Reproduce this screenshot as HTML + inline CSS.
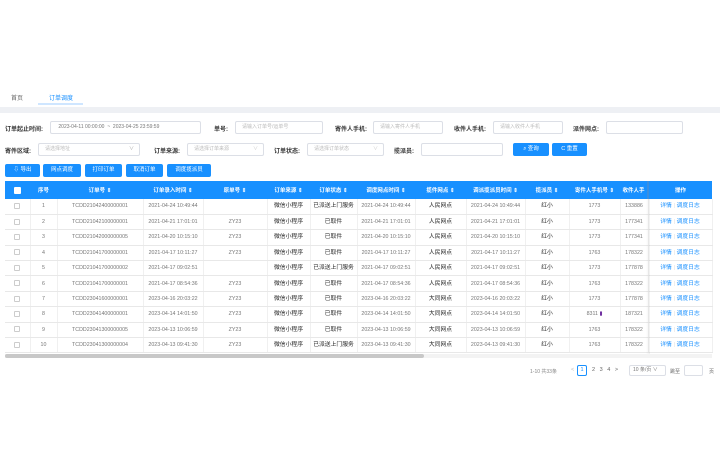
<!DOCTYPE html>
<html><head><meta charset="utf-8"><style>
*{margin:0;padding:0;box-sizing:border-box}
body{width:720px;height:450px;background:#fff;font-family:"Liberation Sans","Noto Sans CJK SC",sans-serif;position:relative;overflow:hidden;color:#333}
.a{position:absolute;white-space:nowrap}
.lbl{font-size:6px;font-weight:bold;color:#333}
.inp{position:absolute;height:13px;border:1px solid #dcdfe6;border-radius:2px;font-size:5px;color:#bbb;padding-left:6px;line-height:11px}
.btn{position:absolute;height:13px;background:#1890ff;color:#fff;font-size:5.5px;border-radius:2px;text-align:center;line-height:13px}
table{border-collapse:collapse;position:absolute;left:5px;top:181px;table-layout:fixed;font-size:5.3px}
th{background:#1890ff;color:#fff;height:18px;font-weight:bold;font-size:5.5px;vertical-align:middle}
td{height:15.4px;line-height:8px;vertical-align:middle;border-bottom:1px solid #e8e8e8;border-right:1px solid #f0f0f0;color:#777;text-align:center;white-space:nowrap;overflow:hidden}
td.k{color:#222;font-size:5.8px}
td.op{color:#1890ff;font-size:5.8px}
.cb{display:inline-block;vertical-align:middle;width:6px;height:6px;border:1px solid #ccc;background:#fff;border-radius:1px}
</style></head><body>
<div class="a" style="left:11px;top:93px;font-size:6px;color:#666">首页</div>
<div class="a" style="left:49px;top:93px;font-size:6px;color:#1890ff">订单调度</div>
<div class="a" style="left:38px;top:103px;width:45px;height:2px;background:#cfe6ff"></div>
<div class="a" style="left:0;top:107px;width:720px;height:6px;background:#eef0f4"></div>

<div class="a lbl" style="left:5px;top:124px">订单起止时间:</div>
<div class="inp" style="left:50px;top:121px;width:151px;color:#777">&nbsp;2023-04-11 00:00:00 &nbsp;~ &nbsp;2023-04-25 23:59:59</div>
<div class="a lbl" style="left:214px;top:124px">单号:</div>
<div class="inp" style="left:235px;top:121px;width:88px">请输入订单号/运单号</div>
<div class="a lbl" style="left:335px;top:124px">寄件人手机:</div>
<div class="inp" style="left:373px;top:121px;width:70px">请输入寄件人手机</div>
<div class="a lbl" style="left:454px;top:124px">收件人手机:</div>
<div class="inp" style="left:493px;top:121px;width:70px">请输入收件人手机</div>
<div class="a lbl" style="left:573px;top:124px">派件网点:</div>
<div class="inp" style="left:606px;top:121px;width:77px"></div>

<div class="a lbl" style="left:5px;top:146px">寄件区域:</div>
<div class="inp" style="left:38px;top:143px;width:102px">请选择地址<span style="position:absolute;right:5px;color:#aaa">∨</span></div>
<div class="a lbl" style="left:154px;top:146px">订单来源:</div>
<div class="inp" style="left:187px;top:143px;width:77px">请选择订单来源<span style="position:absolute;right:5px;color:#ccc">∨</span></div>
<div class="a lbl" style="left:274px;top:146px">订单状态:</div>
<div class="inp" style="left:307px;top:143px;width:77px">请选择订单状态<span style="position:absolute;right:5px;color:#ccc">∨</span></div>
<div class="a lbl" style="left:394px;top:146px">揽派员:</div>
<div class="inp" style="left:421px;top:143px;width:82px"></div>
<div class="btn" style="left:513px;top:143px;width:36px">⌕ 查询</div>
<div class="btn" style="left:552px;top:143px;width:35px">C 重置</div>

<div class="btn" style="left:5px;top:164px;width:35px">⇩ 导出</div>
<div class="btn" style="left:43px;top:164px;width:38px">网点调度</div>
<div class="btn" style="left:85px;top:164px;width:37px">打印订单</div>
<div class="btn" style="left:126px;top:164px;width:37px">取消订单</div>
<div class="btn" style="left:167px;top:164px;width:44px">调度揽派员</div>

<table>
<colgroup><col style="width:25px"><col style="width:27px"><col style="width:86px"><col style="width:60px"><col style="width:64px"><col style="width:43px"><col style="width:47px"><col style="width:58px"><col style="width:51px"><col style="width:59px"><col style="width:44px"><col style="width:51px"><col style="width:28px"><col style="width:64px"></colgroup>
<tr><th><span class="cb" style="width:7px;height:7px;border:none"></span></th><th>序号</th><th>订单号 ⇕</th><th>订单录入时间 ⇕</th><th>原单号 ⇕</th><th>订单来源 ⇕</th><th>订单状态 ⇕</th><th>调度网点时间 ⇕</th><th>揽件网点 ⇕</th><th>调派揽派员时间 ⇕</th><th>揽派员 ⇕</th><th>寄件人手机号 ⇕</th><th>收件人手</th><th style="border-left:2px solid #3a8ee0">操作</th></tr>
<tr><td><span class="cb"></span></td><td>1</td><td>TCDD21042400000001</td><td>2021-04-24 10:49:44</td><td></td><td class="k">微信小程序</td><td class="k">已派送上门服务</td><td>2021-04-24 10:49:44</td><td class="k">人民网点</td><td>2021-04-24 10:49:44</td><td class="k">红小</td><td>1773</td><td>133886</td><td class="op">详情 <span style="color:#ddd">|</span> 调度日志</td></tr>
<tr><td><span class="cb"></span></td><td>2</td><td>TCDD21042100000001</td><td>2021-04-21 17:01:01</td><td>ZY23</td><td class="k">微信小程序</td><td class="k">已取件</td><td>2021-04-21 17:01:01</td><td class="k">人民网点</td><td>2021-04-21 17:01:01</td><td class="k">红小</td><td>1773</td><td>177341</td><td class="op">详情 <span style="color:#ddd">|</span> 调度日志</td></tr>
<tr><td><span class="cb"></span></td><td>3</td><td>TCDD21042000000005</td><td>2021-04-20 10:15:10</td><td>ZY23</td><td class="k">微信小程序</td><td class="k">已取件</td><td>2021-04-20 10:15:10</td><td class="k">人民网点</td><td>2021-04-20 10:15:10</td><td class="k">红小</td><td>1773</td><td>177341</td><td class="op">详情 <span style="color:#ddd">|</span> 调度日志</td></tr>
<tr><td><span class="cb"></span></td><td>4</td><td>TCDD21041700000001</td><td>2021-04-17 10:11:27</td><td>ZY23</td><td class="k">微信小程序</td><td class="k">已取件</td><td>2021-04-17 10:11:27</td><td class="k">人民网点</td><td>2021-04-17 10:11:27</td><td class="k">红小</td><td>1763</td><td>178322</td><td class="op">详情 <span style="color:#ddd">|</span> 调度日志</td></tr>
<tr><td><span class="cb"></span></td><td>5</td><td>TCDD21041700000002</td><td>2021-04-17 09:02:51</td><td></td><td class="k">微信小程序</td><td class="k">已派送上门服务</td><td>2021-04-17 09:02:51</td><td class="k">人民网点</td><td>2021-04-17 09:02:51</td><td class="k">红小</td><td>1773</td><td>177878</td><td class="op">详情 <span style="color:#ddd">|</span> 调度日志</td></tr>
<tr><td><span class="cb"></span></td><td>6</td><td>TCDD21041700000001</td><td>2021-04-17 08:54:36</td><td>ZY23</td><td class="k">微信小程序</td><td class="k">已取件</td><td>2021-04-17 08:54:36</td><td class="k">人民网点</td><td>2021-04-17 08:54:36</td><td class="k">红小</td><td>1763</td><td>178322</td><td class="op">详情 <span style="color:#ddd">|</span> 调度日志</td></tr>
<tr><td><span class="cb"></span></td><td>7</td><td>TCDD23041600000001</td><td>2023-04-16 20:03:22</td><td>ZY23</td><td class="k">微信小程序</td><td class="k">已取件</td><td>2023-04-16 20:03:22</td><td class="k">大同网点</td><td>2023-04-16 20:03:22</td><td class="k">红小</td><td>1773</td><td>177878</td><td class="op">详情 <span style="color:#ddd">|</span> 调度日志</td></tr>
<tr><td><span class="cb"></span></td><td>8</td><td>TCDD23041400000001</td><td>2023-04-14 14:01:50</td><td>ZY23</td><td class="k">微信小程序</td><td class="k">已取件</td><td>2023-04-14 14:01:50</td><td class="k">大同网点</td><td>2023-04-14 14:01:50</td><td class="k">红小</td><td>8311 <span style="color:#7030a0">▮</span></td><td>187321</td><td class="op">详情 <span style="color:#ddd">|</span> 调度日志</td></tr>
<tr><td><span class="cb"></span></td><td>9</td><td>TCDD23041300000005</td><td>2023-04-13 10:06:59</td><td>ZY23</td><td class="k">微信小程序</td><td class="k">已取件</td><td>2023-04-13 10:06:59</td><td class="k">大同网点</td><td>2023-04-13 10:06:59</td><td class="k">红小</td><td>1763</td><td>178322</td><td class="op">详情 <span style="color:#ddd">|</span> 调度日志</td></tr>
<tr><td><span class="cb"></span></td><td>10</td><td>TCDD23041300000004</td><td>2023-04-13 09:41:30</td><td>ZY23</td><td class="k">微信小程序</td><td class="k">已派送上门服务</td><td>2023-04-13 09:41:30</td><td class="k">大同网点</td><td>2023-04-13 09:41:30</td><td class="k">红小</td><td>1763</td><td>178322</td><td class="op">详情 <span style="color:#ddd">|</span> 调度日志</td></tr>
</table>
<div class="a" style="left:646px;top:199px;width:4px;height:155px;background:linear-gradient(90deg,rgba(0,0,0,0),rgba(0,0,0,.06))"></div>
<div class="a" style="left:5px;top:354px;width:707px;height:4px;background:#f3f3f3"></div>
<div class="a" style="left:5px;top:354px;width:419px;height:4px;background:#c8c8c8;border-radius:2px"></div>

<div class="a" style="left:530px;top:368px;font-size:5px;color:#888">1-10 共33条</div>
<div class="a" style="left:571px;top:367px;font-size:5.5px;color:#bbb">&lt;</div>
<div class="a" style="left:577px;top:365px;width:10px;height:11px;border:1px solid #1890ff;border-radius:2px;font-size:5.5px;color:#1890ff;text-align:center;line-height:9px">1</div>
<div class="a" style="left:592px;top:367px;font-size:5.5px;color:#666">2 &nbsp;&nbsp;3 &nbsp;&nbsp;4 &nbsp;&nbsp;&gt;</div>
<div class="a" style="left:629px;top:365px;width:37px;height:11px;border:1px solid #dcdfe6;border-radius:2px;font-size:5px;color:#777;line-height:9px;padding-left:3px">10 条/页 ∨</div>
<div class="a" style="left:670px;top:368px;font-size:5px;color:#666">跳至</div>
<div class="a" style="left:684px;top:365px;width:19px;height:11px;border:1px solid #dcdfe6;border-radius:2px"></div>
<div class="a" style="left:709px;top:368px;font-size:5px;color:#666">页</div>
</body></html>
